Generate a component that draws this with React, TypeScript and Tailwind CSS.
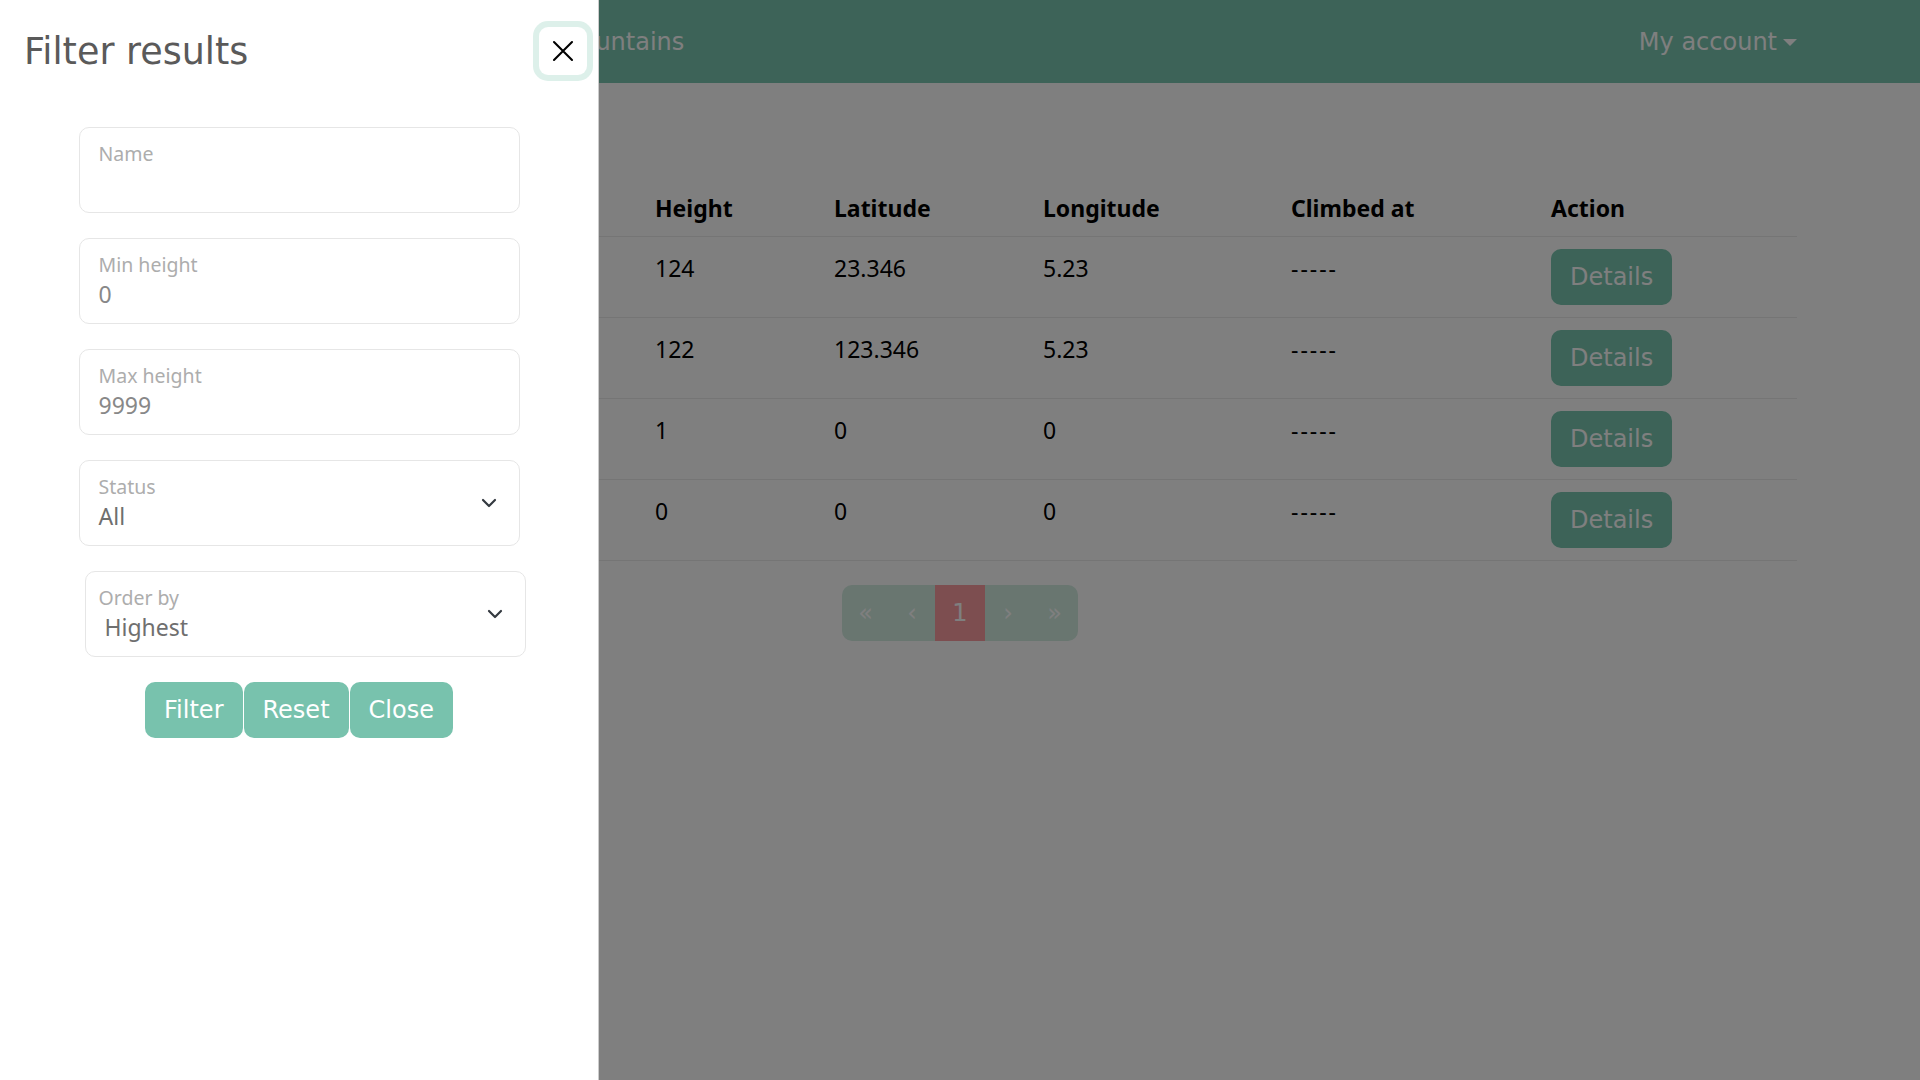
import { ChevronDown } from "lucide-react"

const headFont = { fontFamily: '"DejaVu Sans", sans-serif' }
const bodyFont = { fontFamily: '"Noto Sans", "Open Sans", sans-serif' }

const rows = [
  { height: "124", lat: "23.346", lng: "5.23" },
  { height: "122", lat: "123.346", lng: "5.23" },
  { height: "1", lat: "0", lng: "0" },
  { height: "0", lat: "0", lng: "0" },
]

function Field({ label, value }: { label: string; value: string }) {
  return (
    <div className="h-[86px] rounded-[10px] border border-[#e6e6e6] px-[19px] pt-[14px]">
      <div className="text-[19.5px] leading-[24px] text-[#adadad]">{label}</div>
      <div className="mt-[2px] h-[30px] text-[23px] leading-[30px] text-[#888]">{value}</div>
    </div>
  )
}

function SelectField({ label, value, shifted }: { label: string; value: string; shifted?: boolean }) {
  return (
    <div
      className={
        shifted
          ? "ml-[6px] -mr-[6px] flex h-[86px] items-center rounded-[10px] border border-[#e6e6e6] pr-[18px]"
          : "flex h-[86px] items-center rounded-[10px] border border-[#e6e6e6] pr-[18px]"
      }
    >
      <div className="flex-1 self-start pt-[14px]">
        <div className={shifted ? "pl-[13px] text-[19.5px] leading-[24px] text-[#adadad]" : "pl-[19px] text-[19.5px] leading-[24px] text-[#adadad]"}>
          {label}
        </div>
        <div className="mt-[2px] pl-[19px] text-[23px] leading-[30px] text-[#6f6f6f]">{value}</div>
      </div>
      <ChevronDown className="h-[24px] w-[24px] text-[#343a40]" strokeWidth={2.2} />
    </div>
  )
}

export default function App() {
  return (
    <div className="relative min-h-screen bg-white" style={bodyFont}>
      {/* Navbar */}
      <nav className="h-[83px] bg-[#7ac6b0]" style={headFont}>
        <div className="mx-auto flex h-full w-[1710px] items-center px-[18px] text-[24px] text-white">
          <span className="ml-[437px]">Mountains</span>
          <div className="ml-auto flex items-center gap-[6px]">
            <span>My account</span>
            <span className="mt-[2px] h-0 w-0 border-x-[7px] border-t-[7px] border-x-transparent border-t-white" />
          </div>
        </div>
      </nav>

      {/* Page content */}
      <main className="mx-auto w-[1710px] px-[18px] pt-[93px]">
        <table className="w-full table-fixed border-collapse text-[23px] text-black">
          <thead>
            <tr className="border-b border-[#ebebeb] text-left align-bottom">
              <th className="w-[520px] p-[12px]" />
              <th className="w-[179px] px-[12px] pt-[14px] pb-[10px] leading-[36px] font-bold">Height</th>
              <th className="w-[209px] px-[12px] pt-[14px] pb-[10px] leading-[36px] font-bold">Latitude</th>
              <th className="w-[248px] px-[12px] pt-[14px] pb-[10px] leading-[36px] font-bold">Longitude</th>
              <th className="w-[260px] px-[12px] pt-[14px] pb-[10px] leading-[36px] font-bold">Climbed at</th>
              <th className="px-[12px] pt-[14px] pb-[10px] leading-[36px] font-bold">Action</th>
            </tr>
          </thead>
          <tbody>
            {rows.map((r, i) => (
              <tr key={i} className="border-b border-[#ebebeb] align-top">
                <td className="p-[12px]" />
                <td className="px-[12px] pt-[13px] pb-[11px] leading-[36px]">{r.height}</td>
                <td className="px-[12px] pt-[13px] pb-[11px] leading-[36px]">{r.lat}</td>
                <td className="px-[12px] pt-[13px] pb-[11px] leading-[36px]">{r.lng}</td>
                <td className="px-[12px] pt-[13px] pb-[11px] leading-[36px] tracking-[2px]">-----</td>
                <td className="p-[12px]">
                  <button
                    className="h-[56px] rounded-[10px] bg-[#7ac6b0] px-[19px] text-[24px] text-white"
                    style={headFont}
                  >
                    Details
                  </button>
                </td>
              </tr>
            ))}
          </tbody>
        </table>

        {/* Pagination */}
        <div className="mt-[24px] flex justify-center" style={headFont}>
          <div className="flex h-[56px] overflow-hidden rounded-[10px] bg-[#d2ece1] text-[24px] text-white">
            <span className="flex w-[47px] items-center justify-center">«</span>
            <span className="flex w-[46px] items-center justify-center">‹</span>
            <span className="flex w-[50px] items-center justify-center bg-[#fa9ca0]">1</span>
            <span className="flex w-[46px] items-center justify-center">›</span>
            <span className="flex w-[47px] items-center justify-center">»</span>
          </div>
        </div>
      </main>

      {/* Backdrop */}
      <div className="fixed inset-0 bg-black/50" />

      {/* Offcanvas filter panel */}
      <aside className="fixed top-0 left-0 flex h-screen w-[599px] flex-col border-r border-black/20 bg-white">
        <div className="flex items-start justify-between pt-[27px] pl-[24px] pr-[11px]">
          <h5 className="mt-[1px] text-[36.5px] leading-[48px] text-[#5a5a5a]" style={headFont}>
            Filter results
          </h5>
          <button className="flex h-[48px] w-[48px] items-center justify-center rounded-[9px] shadow-[0_0_0_6px_rgba(120,194,173,0.25)]">
            <svg width="24" height="24" viewBox="0 0 16 16" className="text-black">
              <path d="M2 2L14 14M14 2L2 14" stroke="currentColor" strokeWidth="1.4" strokeLinecap="round" />
            </svg>
          </button>
        </div>

        <form className="mx-auto mt-[51px] flex w-[441px] flex-col gap-[25px]">
          <Field label="Name" value="" />
          <Field label="Min height" value="0" />
          <Field label="Max height" value="9999" />
          <SelectField label="Status" value="All" />
          <SelectField label="Order by" value="Highest" shifted />
          <div className="flex justify-center gap-px" style={headFont}>
            <button type="button" className="h-[56px] rounded-[10px] bg-[#78c2ad] px-[19px] text-[24px] text-white">
              Filter
            </button>
            <button type="button" className="h-[56px] rounded-[10px] bg-[#78c2ad] px-[19px] text-[24px] text-white">
              Reset
            </button>
            <button type="button" className="h-[56px] rounded-[10px] bg-[#78c2ad] px-[19px] text-[24px] text-white">
              Close
            </button>
          </div>
        </form>
      </aside>
    </div>
  )
}
